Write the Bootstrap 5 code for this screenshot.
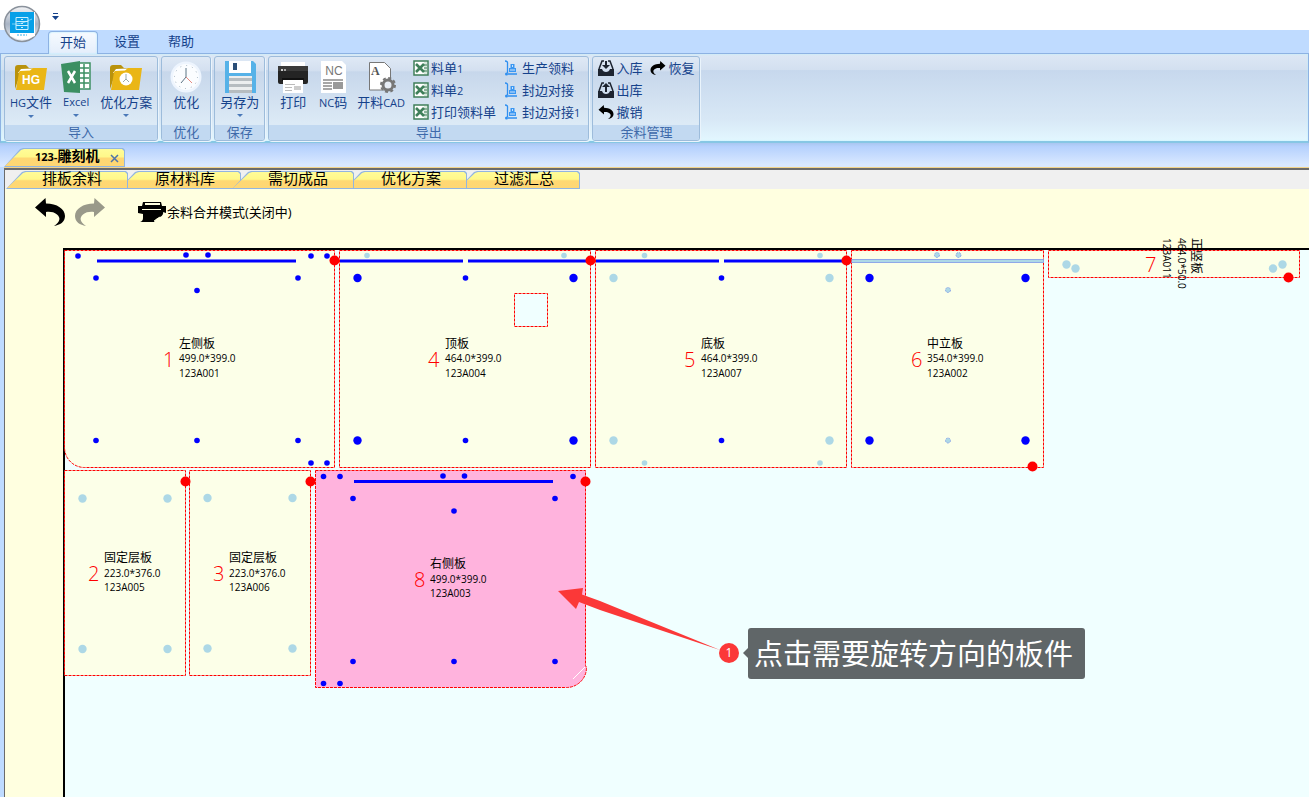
<!DOCTYPE html>
<html lang="zh-CN">
<head>
<meta charset="utf-8">
<meta name="viewport" content="width=device-width, initial-scale=1">
<title>123-雕刻机</title>
<link href="https://cdn.jsdelivr.net/npm/bootstrap@5.3.0/dist/css/bootstrap.min.css" rel="stylesheet">
<style>
  body { font-family: "Open Sans", "Noto Sans CJK SC", sans-serif; font-size: 13px; line-height: 16px; color: #15428b; background: #bfdbff; }
  button { font: inherit; color: inherit; background: none; border: 0; padding: 0; }
  .latin { font-size: 11px; }

  /* title bar and ribbon tabs */
  .title-bar { height: 30px; background: #fff; }
  .orb { position: absolute; left: 3px; top: 5px; z-index: 3; line-height: 0; }
  .quick-menu { margin: 11px 0 0 51px; width: 9px; height: 9px; line-height: 0; }
  .menu-tabs { height: 23px; padding: 1px 0 0 48px; gap: 4px; }
  .menu-tabs button { padding: 0 12px; height: 22px; line-height: 20px; padding-bottom: 2px; }
  .menu-tabs .current { background: linear-gradient(#f6faff, #e4eefb); border: 1px solid #8db2e3; border-bottom: 0; border-radius: 4px 4px 0 0; padding: 0 11px 2px; height: 23px; position: relative; z-index: 2; box-shadow: inset 0 0 2px #a6eaff; }

  /* ribbon */
  .ribbon { border: 1px solid #8db2e3; border-bottom: 2px solid #86c7e4; padding: 2px 3px 0; gap: 3px; background: linear-gradient(#dde8f5 0, #d3e0f0 18%, #c7d8ed 19%, #d8e8f6 75%, #e3f7ff); box-shadow: inset 0 0 2px #b8f2ff; }
  .tool-group { border: 1px solid #9dbcdb; border-radius: 3px; height: 85px; background: linear-gradient(#dfe9f5 0, #d4e0f0 16%, #c7d7eb 18%, #dceaf6 80%); box-shadow: 1px 1px 0 #eaf4fc; overflow: hidden; }
  .tool-group h2 { margin: 0; font-size: 13px; font-weight: 400; line-height: 15px; text-align: center; color: #3e6aaa; background: #c2d9f1; }
  .tool-list { gap: 8px; padding: 0 5px; }
  .tool-list.roomy { padding: 0 8px; }
  .big-tool { min-width: 32px; padding-top: 4px; }
  .big-tool .tool-name { line-height: 18px; white-space: nowrap; }
  .big-tool .arrow { margin-top: 3px; }
  .arrow { border: 3px solid transparent; border-top-color: #4a78b8; border-bottom: 0; }
  .row-tool { height: 22px; gap: 2px; white-space: nowrap; }

  /* document tabs */
  .doc-bar { height: 24px; padding: 5px 0 0 4px; background: linear-gradient(#a9c6f0, #b5d1fd 15%, #d9e8ff 90%); }
  .slant { position: relative; z-index: 0; color: #000; }
  .slant::before, .slant::after { content: ""; position: absolute; inset: 0; z-index: -2; background: #92b5e0; clip-path: polygon(0 100%, 16px 1px, 19px 0, calc(100% - 2px) 0, 100% 2px, 100% 100%); }
  .slant::after { inset: 1px; z-index: -1; background: linear-gradient(#fffc98 0, #fff88a 45%, #ffd873 55%, #ffd774); }
  .doc-tab { width: 121px; padding: 0 0 2px 31px; font-weight: 700; font-size: 14px; line-height: 16px; }
  .doc-tab .close-mark { margin: 3px 0 0 11px; line-height: 0; }
  .frame { margin-left: 4px; border-top: 1px solid #f2d48c; }
  .frame-inner { border: 2px solid #6b6b6b; border-width: 2px 0 0 1px; background: #ffffe0; }
  .page-tabs { background: #f0f0f0; height: 19px; padding-left: 1px; }
  .page-tabs button { width: 122px; height: 18px; margin-top: 1px; margin-right: -9px; padding: 0 0 4px 10px; font-size: 15px; line-height: 14px; }

  .work-bar { height: 59px; padding: 0 0 13px 30px; color: #000; }
  .sheet-wrap { padding-left: 58px; }
  .sheet { position: relative; border: solid #000; border-width: 2px 0 0 2px; background: #f0ffff; }
  .sheet svg.plan { display: block; width: 100%; height: 547px; margin-left: -1px; overflow: visible; }
  .panel { fill: #fcffe8; stroke: #f00; stroke-dasharray: 3 1; }
  .hole { fill: #f0ffff; }
  .picked { fill: #ffb3dd; }
  .drill { fill: #00f; }
  .faded { fill: #add8e6; }
  .ringed { fill: #add8e6; stroke: #8fa8e8; stroke-dasharray: 2 1; }
  .pin { fill: #f00; }
  .plan text { font-size: 10px; fill: #000; }
  .plan .part-name { font-size: 12px; }
  .plan .part-no { font-size: 20px; font-weight: 300; fill: #f00; }
  .plan .step-no { font-size: 12px; fill: #fff; text-anchor: middle; }
  .callout { position: absolute; left: 683px; top: 378px; padding: 0 12px 0 6px; background: #606668; color: #fff; font-size: 29px; line-height: 51px; border-radius: 3px; white-space: nowrap; }
  .callout::before { content: ""; position: absolute; left: -5px; top: 20px; border: 5px solid transparent; border-right-color: #606668; border-left: 0; }
</style>
</head>
<body class="vh-100 overflow-hidden">

<svg class="d-none" aria-hidden="true">
  <symbol id="i-undo" viewBox="0 0 30 28"><path d="M0 9.500 10.500 0 11 5.500C22 5.500 30 11 30 18c0 6-5 9-11 10 6-4 7-8 3-11.500C19 14 15 13.500 11 14v5z"/></symbol>
  <symbol id="i-folder" viewBox="0 0 32 32"><path fill="#b9920c" d="M0 28V7q0-3 3-3h8l3 3h13v4H6z"/><path fill="#fff" d="M3 12 6 8l22-1-2 5z"/><path fill="#eab616" d="M1 29 4 11l1-1 10-.5 3-2.500h14l-3 22z"/></symbol>
  <symbol id="i-sheet" viewBox="0 0 16 16"><path fill="#fff" stroke="#3f7f5a" stroke-width="1.500" d="M1 1h14v14H1z"/><path fill="#d9e8de" d="M11 2h3v12h-3z"/><path stroke="#3f7f5a" d="M11 5h3M11 8h3M11 11h3"/><path stroke="#3f7f5a" stroke-width="2.600" d="m3 4 8 8M11 4l-8 8"/></symbol>
  <symbol id="i-cart" viewBox="0 0 16 16"><path fill="none" stroke="#2f8ff0" stroke-width="1.300" d="M1 1q3 0 2.500 3v9M4 14l9 0"/><circle cx="2.500" cy="14" r="1.500" fill="#2f8ff0"/><path fill="#3a97f2" d="M5 12V8h1.500V4h4v4H12v4z"/><path stroke="#cfe4fb" d="M6 10h5M8.500 5v2"/></symbol>
  <symbol id="i-tray" viewBox="0 0 16 16"><path fill="#1d2430" d="M0 9h4q1 3 4 3t4-3h4v7H0z"/><path fill="none" stroke="#1d2430" stroke-width="1.500" d="M1 9 4 1h2M15 9l-3-8h-2"/></symbol>
</svg>

<header class="position-relative">
  <button class="orb" aria-label="应用菜单">
    <svg width="38" height="38" viewBox="0 0 38 38"><defs><linearGradient id="rim" x1="0" y1="0" x2="0" y2="1"><stop offset="0" stop-color="#f4f5f7"/><stop offset=".5" stop-color="#a9b4c4"/><stop offset="1" stop-color="#eef3f8"/></linearGradient></defs><circle cx="19" cy="19" r="17.500" fill="url(#rim)" stroke="#8a929c" stroke-width="1.500"/><path fill="#fff" d="M7 7h25v24q-12 7-25 0z"/><path fill="#06a0e8" d="M7 7h24v21H7z"/><g fill="none" stroke="#c9f0ff"><path d="M13 12.500h12v12H13zM13 16.500h12M13 20.500h12M18 18.500h2M18 14.500h2M18 22.500h2"/><path stroke-width=".6" d="M9 19q8 1 20-5"/></g><path stroke="#37b1e8" stroke-dasharray="2 1" d="M14 30h10"/></svg>
  </button>
  <div class="title-bar d-flex align-items-start">
    <button class="quick-menu" aria-label="自定义快速访问"><svg width="7" height="8"><path stroke="#15428b" d="M1 1.500h5"/><path fill="#15428b" d="M0 4h7L3.500 8z"/></svg></button>
  </div>
  <nav class="menu-tabs d-flex"><button class="current">开始</button><button>设置</button><button>帮助</button></nav>
</header>

<section class="ribbon d-flex">
  <div class="tool-group d-flex flex-column">
    <div class="tool-list d-flex flex-fill align-items-start">
      <button class="big-tool d-flex flex-column align-items-center"><svg width="32" height="32" viewBox="0 0 32 32"><use href="#i-folder"/><text x="16" y="23" text-anchor="middle" font-size="12" font-weight="700" fill="#fff" font-family="Liberation Sans">HG</text></svg><span class="tool-name"><span class="latin">HG</span>文件</span><i class="arrow"></i></button>
      <button class="big-tool d-flex flex-column align-items-center"><svg width="32" height="32" viewBox="0 0 32 32"><path fill="#fff" stroke="#3c8f62" stroke-width="1.500" d="M17 2h13v26H17z"/><path stroke="#3c8f62" stroke-width="1.500" d="M19 7h10M19 12h10M19 17h10M19 22h10M24 3v24"/><path fill="#3c8f62" d="M1 3 20 0v32L4 31z"/><path stroke="#fff" stroke-width="2.500" d="m8 10 7 12M15 10 8 22"/></svg><span class="tool-name latin">Excel</span><i class="arrow"></i></button>
      <button class="big-tool d-flex flex-column align-items-center"><svg width="32" height="32" viewBox="0 0 32 32"><use href="#i-folder"/><circle cx="16" cy="18" r="6.500" fill="#fff"/><path fill="none" stroke="#9aa" d="M16 13v5l-3 3M16 18l3 3"/></svg><span class="tool-name">优化方案</span><i class="arrow"></i></button>
    </div>
    <h2>导入</h2>
  </div>
  <div class="tool-group d-flex flex-column">
    <div class="tool-list roomy d-flex flex-fill align-items-start">
      <button class="big-tool d-flex flex-column align-items-center"><svg width="32" height="32" viewBox="0 0 32 32"><circle cx="16" cy="16" r="15.500" fill="#eef5fe"/><circle cx="16" cy="16" r="13" fill="#fbfdff"/><circle cx="16" cy="16" r="11.500" fill="none" stroke="#9fb0c0" stroke-dasharray="1 5"/><path fill="none" stroke="#5d7484" d="M16 7v9l-5 6"/><path stroke="#e68a80" d="m16 16 6 6"/></svg><span class="tool-name">优化</span></button>
    </div>
    <h2>优化</h2>
  </div>
  <div class="tool-group d-flex flex-column">
    <div class="tool-list d-flex flex-fill align-items-start">
      <button class="big-tool d-flex flex-column align-items-center"><svg width="32" height="32" viewBox="0 0 32 32"><path fill="#56b2e8" d="M1 0h28l3 3v29H1z"/><path fill="#fff" d="M5 0h22v12H5z"/><path fill="#2b4f78" d="M9 2h4v7H9z"/><path fill="#eceeef" d="M5 15h23v17H5z"/><path stroke="#b6bcc0" stroke-width="3" d="M5 18.500h23M5 24.500h23M5 30.500h23"/></svg><span class="tool-name">另存为</span><i class="arrow"></i></button>
    </div>
    <h2>保存</h2>
  </div>
  <div class="tool-group d-flex flex-column">
    <div class="tool-list roomy d-flex flex-fill align-items-start">
      <button class="big-tool d-flex flex-column align-items-center"><svg width="32" height="32" viewBox="0 0 32 32"><path fill="#fff" d="M4 1h24v7H4z"/><path fill="#242424" d="M1 5h30v16q0 2-2 2H3q-2 0-2-2z"/><path fill="#3a3a3a" d="M1 5h30v5H1z"/><path fill="#111" d="M5 17h22v3H5z"/><circle cx="5" cy="9" r="1" fill="#fff"/><circle cx="8" cy="9" r="1" fill="#ccc"/><path fill="#fff" d="M6 19h20v13H6z"/><path stroke="#bbb" d="M8 23.500h10M8 26.500h7M8 29.500h7"/><path fill="#ccc" d="M17 25h7v4h-7z"/></svg><span class="tool-name">打印</span></button>
      <button class="big-tool d-flex flex-column align-items-center"><svg width="32" height="32" viewBox="0 0 32 32"><path fill="#fff" d="M4 0h21l4 4v28H4z"/><text x="17" y="14" text-anchor="middle" font-size="12" fill="#777" font-family="Liberation Sans">NC</text><path stroke="#8b8b8b" stroke-width="1.500" d="M6 19h20M6 22h9M6 25h9M6 28h9"/><path fill="#999" d="M16 21h10v7H16z"/></svg><span class="tool-name"><span class="latin">NC</span>码</span></button>
      <button class="big-tool d-flex flex-column align-items-center"><svg width="32" height="32" viewBox="0 0 32 32"><path fill="#fff" stroke="#777" d="M4.500 1.500h15l6 6V29h-21z"/><text x="6" y="14" font-size="12" font-weight="700" fill="#555" font-family="Liberation Serif">A</text><circle cx="23" cy="24" r="5" fill="#e7edf5" stroke="#777" stroke-width="3"/><circle cx="23" cy="24" r="7" fill="none" stroke="#777" stroke-width="2" stroke-dasharray="3 2.500"/></svg><span class="tool-name">开料<span class="latin">CAD</span></span></button>
      <div class="d-flex flex-column">
        <button class="row-tool d-flex align-items-center"><svg width="16" height="16"><use href="#i-sheet"/></svg><span>料单<span class="latin">1</span></span></button>
        <button class="row-tool d-flex align-items-center"><svg width="16" height="16"><use href="#i-sheet"/></svg><span>料单<span class="latin">2</span></span></button>
        <button class="row-tool d-flex align-items-center"><svg width="16" height="16"><use href="#i-sheet"/></svg><span>打印领料单</span></button>
      </div>
      <div class="d-flex flex-column">
        <button class="row-tool d-flex align-items-center"><svg width="16" height="16"><use href="#i-cart"/></svg><span>生产领料</span></button>
        <button class="row-tool d-flex align-items-center"><svg width="16" height="16"><use href="#i-cart"/></svg><span>封边对接</span></button>
        <button class="row-tool d-flex align-items-center"><svg width="16" height="16"><use href="#i-cart"/></svg><span>封边对接<span class="latin">1</span></span></button>
      </div>
    </div>
    <h2>导出</h2>
  </div>
  <div class="tool-group d-flex flex-column">
    <div class="tool-list d-flex flex-fill align-items-start">
      <div class="d-flex flex-column">
        <button class="row-tool d-flex align-items-center"><svg width="16" height="16"><use href="#i-tray"/><path fill="#1d2430" d="M7 1h2v4h3L8 9 4 5h3z"/></svg><span>入库</span></button>
        <button class="row-tool d-flex align-items-center"><svg width="16" height="16"><use href="#i-tray"/><path fill="#1d2430" d="M7 10h2V5h3L8 1 4 5h3z"/></svg><span>出库</span></button>
        <button class="row-tool d-flex align-items-center"><svg width="16" height="14"><use href="#i-undo"/></svg><span>撤销</span></button>
      </div>
      <button class="row-tool d-flex align-items-center"><svg width="16" height="14" viewBox="0 0 16 14"><g transform="matrix(-1 0 0 1 16 0)"><use href="#i-undo" width="16" height="14"/></g></svg><span>恢复</span></button>
    </div>
    <h2>余料管理</h2>
  </div>
</section>

<div class="doc-bar d-flex">
  <button class="slant doc-tab d-flex align-items-center"><span><span class="latin">123-</span>雕刻机</span><span class="close-mark"><svg width="9" height="9"><path stroke="#4f74a8" stroke-width="1.500" d="m1 1 7 7M8 1 1 8"/></svg></span></button>
</div>

<main class="frame">
  <div class="frame-inner">
    <nav class="page-tabs d-flex">
      <button class="slant z-2">排板余料</button>
      <button class="slant z-1">原材料库</button>
      <button class="slant z-3">需切成品</button>
      <button class="slant z-2">优化方案</button>
      <button class="slant z-1">过滤汇总</button>
    </nav>
    <div class="work-bar d-flex align-items-center">
      <button class="me-2" aria-label="撤销"><svg class="d-block" width="32" height="28"><use href="#i-undo" width="30" height="28"/></svg></button>
      <button aria-label="恢复"><svg class="d-block" width="30" height="28" viewBox="0 0 30 28"><g transform="matrix(-1 0 0 1 30 0)" fill="#99998a"><use href="#i-undo" width="30" height="28"/></g></svg></button>
      <button class="d-flex align-items-center ms-4"><svg class="ms-2" width="30" height="24" viewBox="0 0 30 24"><path d="M6 2h18l1 4H5zM1 6h28v7l-3-1v-1H6v3l-5-1z"/><path stroke="#ffffe0" stroke-width="2" d="M8 4h15"/><path stroke="#ffffe0" d="M5 9.500h19"/><path d="M6 11h20q1 4-3 6-4 1-6 5H3q3-1 3-4z"/><path stroke="#ffffe0" d="m17 21 6-4"/></svg><span>余料合并模式(关闭中)</span></button>
    </div>

    <div class="sheet-wrap">
      <div class="sheet">
        <svg class="plan" role="img" aria-label="排板图">
          <!-- 1 左侧板 -->
          <g>
            <path class="panel" d="M.5.500h270v217h-250a20 20 0 0 1-20-20z"/>
            <path class="drill" d="M33 9.500h199v3H33z"/>
            <g class="drill"><circle cx="14" cy="6" r="2.800"/><circle cx="122" cy="5" r="2.800"/><circle cx="144" cy="5" r="2.800"/><circle cx="247" cy="6" r="2.800"/><circle cx="263" cy="6" r="2.800"/><circle cx="32" cy="28" r="2.800"/><circle cx="234" cy="28" r="2.800"/><circle cx="133" cy="40.500" r="2.800"/><circle cx="32" cy="190.500" r="2.800"/><circle cx="133" cy="190.500" r="2.800"/><circle cx="234" cy="190.500" r="2.800"/><circle cx="247" cy="213" r="2.800"/><circle cx="263" cy="213" r="2.800"/></g>
            <text class="part-no" x="99" y="117">1</text><text class="part-name" x="115" y="98">左侧板</text><text x="115" y="112">499.0*399.0</text><text x="115" y="127">123A001</text>
          </g>
          <!-- 4 顶板 -->
          <g transform="translate(275)">
            <path class="panel" d="M.5.500h251v217H.5z"/><path class="panel hole" d="M175.500 43.500h33v33h-33z"/>
            <path class="drill" d="M1 9.500h123v3H1zM129 9.500h122v3H129z"/>
            <g class="faded"><circle cx="28" cy="5.500" r="2.800"/><circle cx="225" cy="5.500" r="2.800"/></g>
            <g class="drill"><circle cx="18.500" cy="28" r="4.200"/><circle cx="234.500" cy="28" r="4.200"/><circle cx="18.500" cy="190.500" r="4.200"/><circle cx="234.500" cy="190.500" r="4.200"/><circle cx="126.500" cy="28" r="2.800"/><circle cx="126.500" cy="190.500" r="2.800"/></g>
            <text class="part-no" x="89" y="117">4</text><text class="part-name" x="106" y="98">顶板</text><text x="106" y="112">464.0*399.0</text><text x="106" y="127">123A004</text>
          </g>
          <!-- 5 底板 -->
          <g transform="translate(531)">
            <path class="panel" d="M.5.500h251v217H.5z"/>
            <path class="drill" d="M1 9.500h123v3H1zM129 9.500h122v3H129z"/>
            <g class="faded"><circle cx="49.500" cy="5.500" r="2.800"/><circle cx="225" cy="5.500" r="2.800"/><circle cx="18.500" cy="28" r="4.200"/><circle cx="234.500" cy="28" r="4.200"/><circle cx="18.500" cy="190.500" r="4.200"/><circle cx="234.500" cy="190.500" r="4.200"/><circle cx="49.500" cy="213" r="2.800"/><circle cx="225" cy="213" r="2.800"/></g>
            <g class="drill"><circle cx="126.500" cy="28" r="2.800"/><circle cx="126.500" cy="190.500" r="2.800"/></g>
            <text class="part-no" x="89" y="117">5</text><text class="part-name" x="106" y="98">底板</text><text x="106" y="112">464.0*399.0</text><text x="106" y="127">123A007</text>
          </g>
          <!-- 6 中立板 -->
          <g transform="translate(787)">
            <path class="panel" d="M.5.500h192v217H.5z"/>
            <path fill="#add8e6" stroke="#8fa8e8" d="M.5 9.500h192v3H.5z"/>
            <g class="ringed"><circle cx="86" cy="5" r="2.500"/><circle cx="107.500" cy="5" r="2.500"/><circle cx="97" cy="40" r="2.500"/><circle cx="97" cy="190.500" r="2.500"/></g>
            <g class="drill"><circle cx="18.500" cy="28" r="4.200"/><circle cx="174.500" cy="28" r="4.200"/><circle cx="18.500" cy="190.500" r="4.200"/><circle cx="174.500" cy="190.500" r="4.200"/></g>
            <text class="part-no" x="60" y="117">6</text><text class="part-name" x="76" y="98">中立板</text><text x="76" y="112">354.0*399.0</text><text x="76" y="127">123A002</text>
          </g>
          <!-- 7 正竖板 -->
          <g transform="translate(984)">
            <path class="panel" d="M.5.500h251v27H.5z"/>
            <g class="faded"><circle cx="18.500" cy="14.500" r="4.200"/><circle cx="27.500" cy="18.500" r="4.200"/><circle cx="225" cy="18.500" r="4.200"/><circle cx="234.500" cy="14.500" r="4.200"/></g>
            <text class="part-no" x="97" y="22">7</text>
            <text class="part-name" transform="translate(144 -12) rotate(90)">正竖板</text><text transform="translate(130 -12) rotate(90)">464.0*50.0</text><text transform="translate(115 -12) rotate(90)">123A011</text>
          </g>
          <!-- 2, 3 固定层板 -->
          <g transform="translate(0 220)">
            <path class="panel" d="M.5.500h121v205H.5z"/>
            <g class="faded"><circle cx="18.500" cy="28.500" r="4.200"/><circle cx="103.500" cy="28.500" r="4.200"/><circle cx="18.500" cy="179" r="4.200"/><circle cx="103.500" cy="179" r="4.200"/></g>
            <text class="part-no" x="24" y="111">2</text><text class="part-name" x="40" y="92">固定层板</text><text x="40" y="107">223.0*376.0</text><text x="40" y="121">123A005</text>
          </g>
          <g transform="translate(125 220)">
            <path class="panel" d="M.5.500h121v205H.5z"/>
            <g class="faded"><circle cx="18.500" cy="28" r="4.200"/><circle cx="103.500" cy="28" r="4.200"/><circle cx="18.500" cy="178.500" r="4.200"/><circle cx="103.500" cy="178.500" r="4.200"/></g>
            <text class="part-no" x="24" y="111">3</text><text class="part-name" x="40" y="92">固定层板</text><text x="40" y="107">223.0*376.0</text><text x="40" y="121">123A006</text>
          </g>
          <!-- 8 右侧板 -->
          <g transform="translate(251 220)">
            <path class="panel picked" d="M.5.500h270v195l1 2a20 20 0 0 1-20 20H.5z"/><path stroke="#fff" d="m258 209 12-12"/>
            <path class="drill" d="M39 10h199v3H39z"/>
            <g class="drill"><circle cx="8.500" cy="6.500" r="2.800"/><circle cx="25" cy="6.500" r="2.800"/><circle cx="128" cy="6" r="2.800"/><circle cx="149.500" cy="6" r="2.800"/><circle cx="258" cy="6.500" r="2.800"/><circle cx="38" cy="28.500" r="2.800"/><circle cx="240" cy="28.500" r="2.800"/><circle cx="139" cy="41" r="2.800"/><circle cx="38" cy="191.500" r="2.800"/><circle cx="139" cy="191.500" r="2.800"/><circle cx="240" cy="191.500" r="2.800"/><circle cx="8.500" cy="213.500" r="2.800"/><circle cx="25" cy="213.500" r="2.800"/></g>
            <text class="part-no" x="99" y="117">8</text><text class="part-name" x="115" y="98">右侧板</text><text x="115" y="113">499.0*399.0</text><text x="115" y="127">123A003</text>
          </g>
          <g class="pin"><circle cx="270.500" cy="10.500" r="5"/><circle cx="526.500" cy="10.500" r="5"/><circle cx="782.500" cy="10.500" r="5"/><circle cx="968.500" cy="216.500" r="5"/><circle cx="1224.500" cy="27.500" r="5"/><circle cx="121.500" cy="231.500" r="5"/><circle cx="246.500" cy="231.500" r="5"/><circle cx="521.500" cy="231.500" r="5"/></g>
          <g fill="#fb3838"><path d="m494 341 25-3-1 6.500 18 6.500 120 49-120-40-21-8-3 7z"/><circle cx="665" cy="403" r="10"/></g>
          <text class="step-no" x="665" y="407">1</text>
        </svg>
        <div class="callout">点击需要旋转方向的板件</div>
      </div>
    </div>
  </div>
</main>

<script src="https://cdn.jsdelivr.net/npm/bootstrap@5.3.0/dist/js/bootstrap.bundle.min.js"></script>
</body>
</html>
